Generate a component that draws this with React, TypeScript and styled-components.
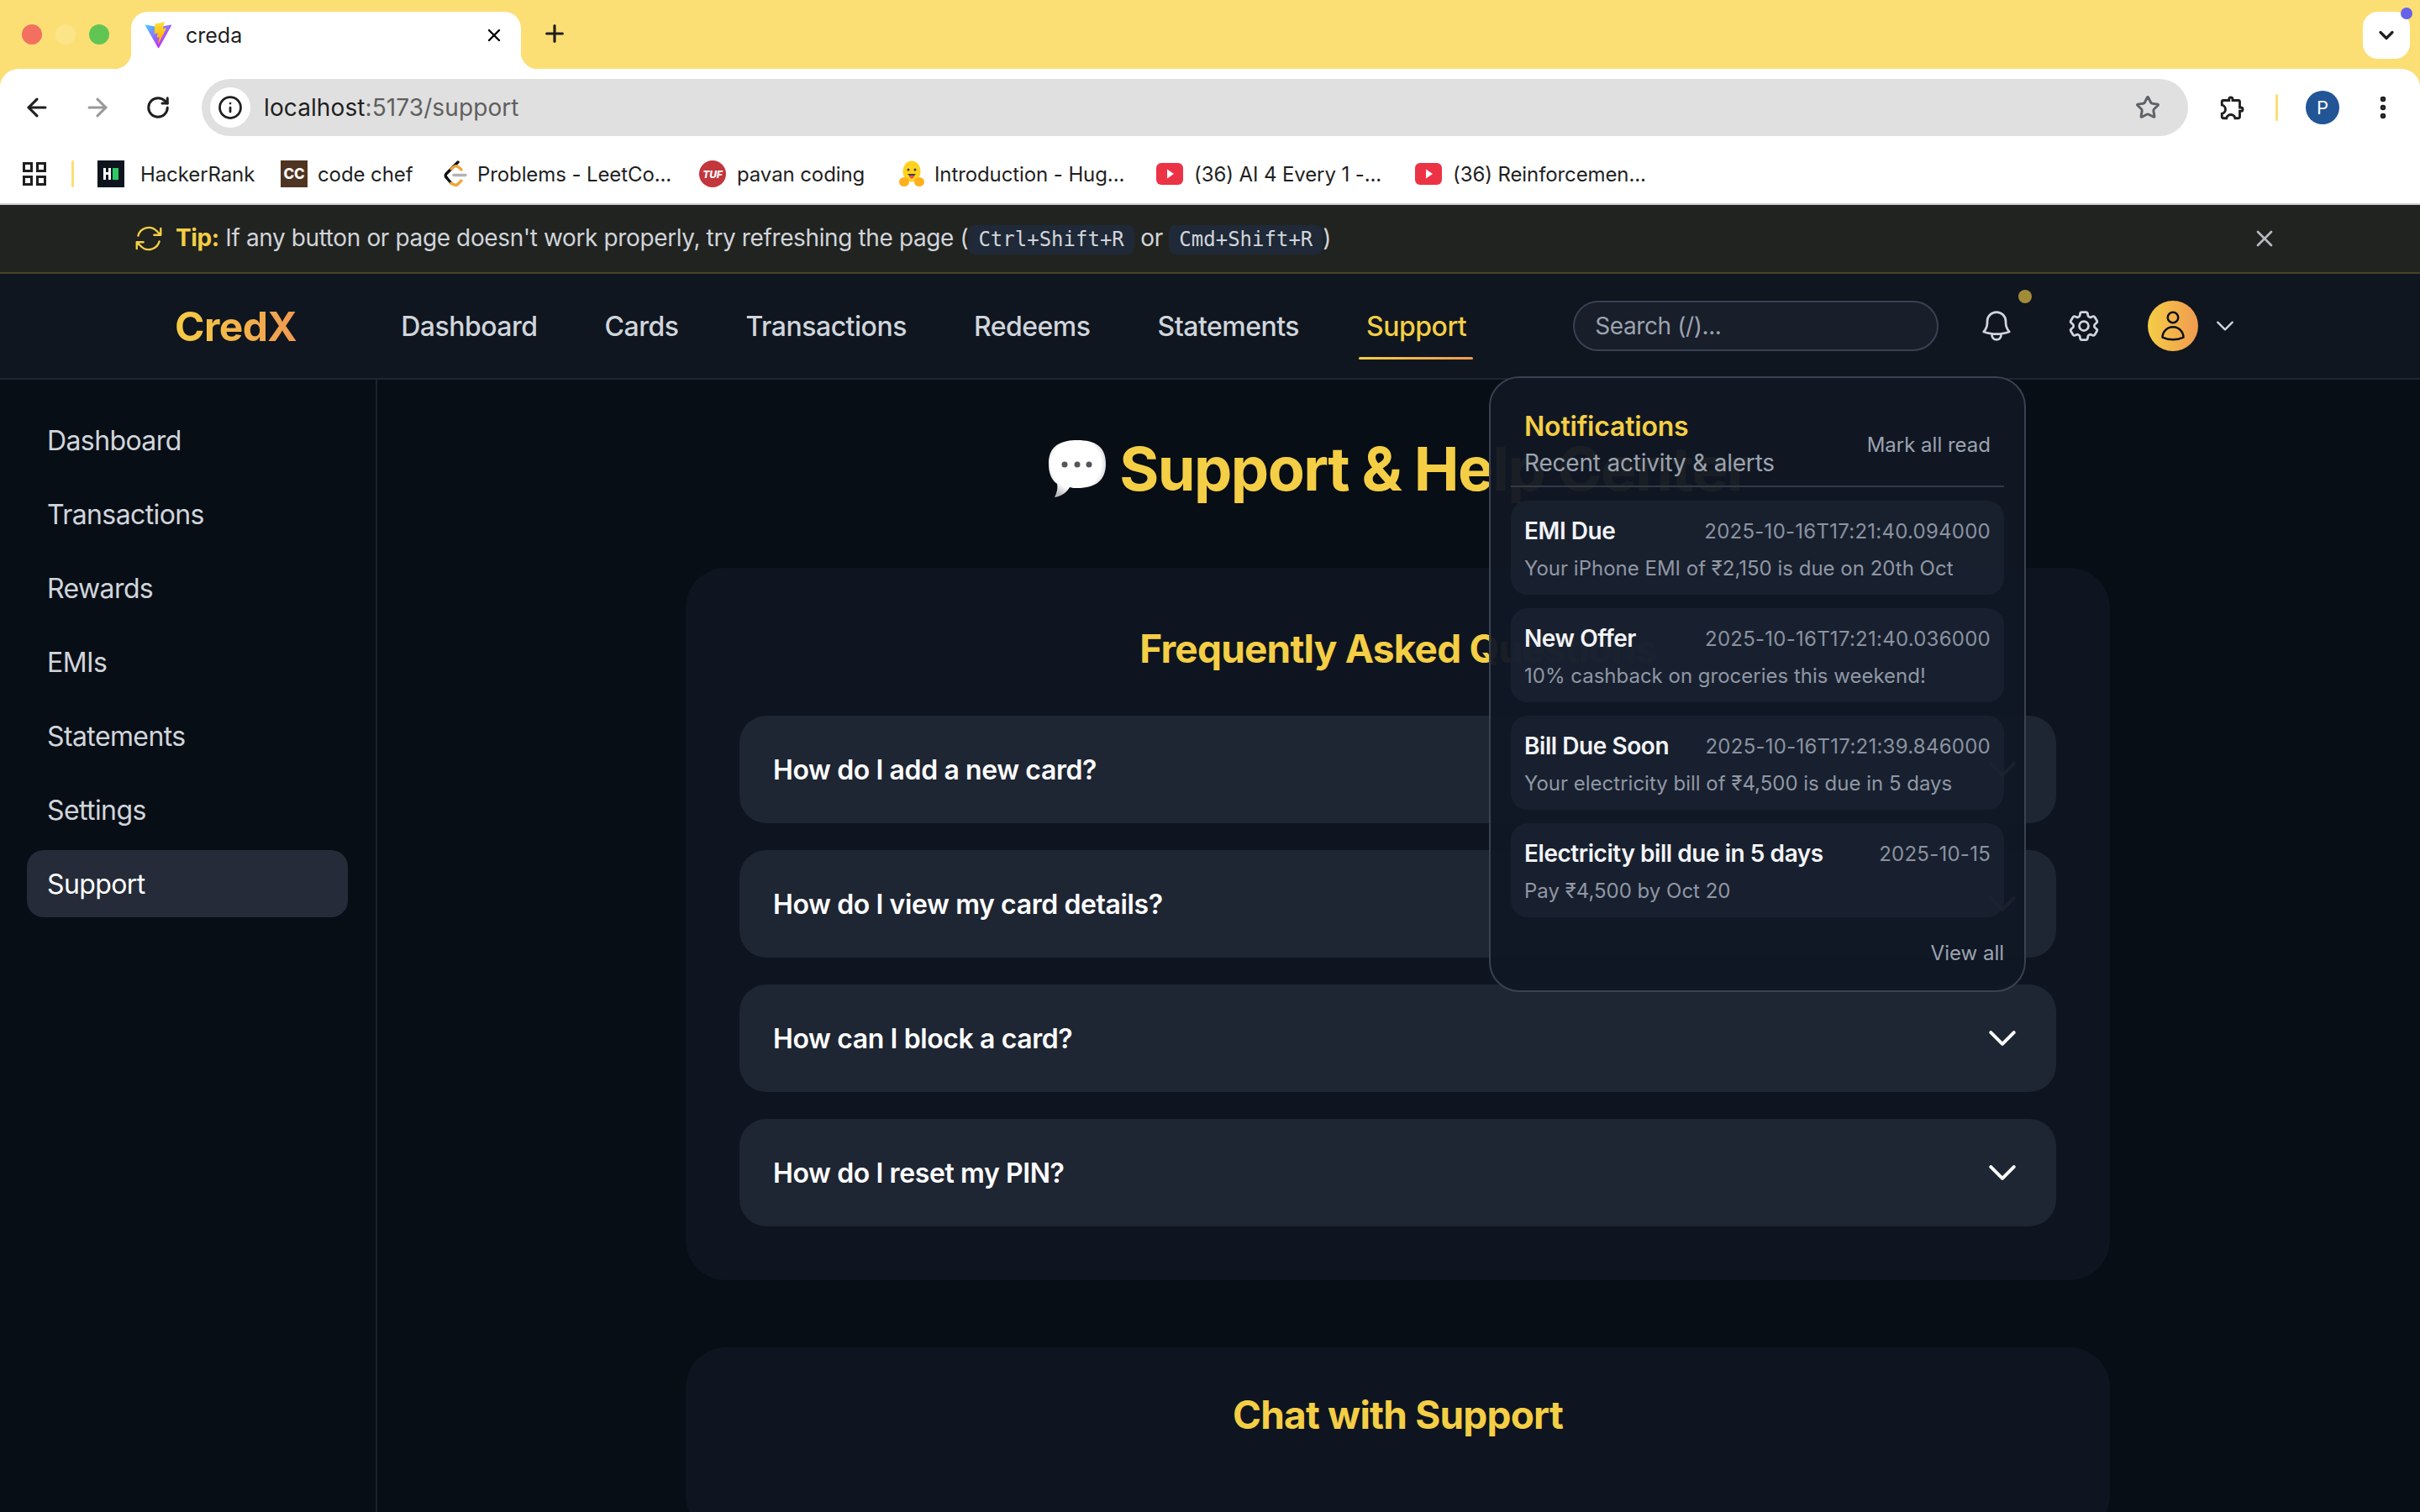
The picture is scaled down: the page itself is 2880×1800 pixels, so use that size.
import React from "react";
import styled, { createGlobalStyle } from "styled-components";
import { ArrowLeft, ArrowRight, RotateCw, Info, Star, EllipsisVertical, Plus, X, ChevronDown } from "lucide-react";
import { MdOutlineExtension } from "react-icons/md";
import { HiOutlineBell, HiOutlineCog6Tooth, HiOutlineUser, HiOutlineChevronDown, HiOutlineArrowPath } from "react-icons/hi2";

const YELLOW = "#f4ce45";
const CHROME = "#fbdf75";
const SANS = `Inter, "Noto Sans", sans-serif`;

const Global = createGlobalStyle`
  html, body { margin: 0; padding: 0; background: #080e16; }
  body { font-family: ${SANS}; }
  * { box-sizing: border-box; }
`;

const Page = styled.div`
  width: 2880px; height: 1800px; overflow: hidden;
  display: flex; flex-direction: column; background: #080e16;
`;

/* ---------- browser chrome ---------- */
const TabStrip = styled.div`
  height: 82px; background: ${CHROME}; padding: 14px 12px 0 26px;
  display: flex; align-items: flex-start; flex: none;
`;
const Lights = styled.div`display: flex; gap: 16px; margin-top: 15px;`;
const Light = styled.span<{ $c: string }>`
  width: 24px; height: 24px; border-radius: 50%; background: ${p => p.$c};
`;
const Tab = styled.div`
  position: relative; width: 464px; height: 68px; margin-left: 26px;
  background: #fff; border-radius: 20px 20px 0 0;
  display: flex; align-items: center; padding: 0 20px 12px 16px; gap: 16px;
  &::before, &::after {
    content: ""; position: absolute; bottom: 0; width: 20px; height: 20px;
  }
  &::before { left: -20px; background: radial-gradient(circle at 0 0, transparent 20px, #fff 20.5px); }
  &::after { right: -20px; background: radial-gradient(circle at 100% 0, transparent 20px, #fff 20.5px); }
`;
const TabTitle = styled.span`font-size: 25px; color: #1f1f1f; flex: 1;`;
const NewTab = styled.span`display: flex; margin: 10px 0 0 24px; color: #1f1f1f;`;
const TabMenu = styled.div`
  position: relative; margin-left: auto; width: 56px; height: 56px; border-radius: 18px;
  background: #fff; display: flex; align-items: center; justify-content: center; color: #1f1f1f;
`;
const TabDot = styled.span`
  position: absolute; top: -5px; right: -3px; width: 14px; height: 14px; border-radius: 50%;
  background: #6763e8;
`;
const ToolbarWrap = styled.div`background: ${CHROME}; flex: none;`;
const Toolbar = styled.div`
  height: 94px; background: #fff; border-radius: 22px 22px 0 0;
  display: flex; align-items: center; padding: 0 0 2px 26px;
`;
const NavIcon = styled.span<{ $w?: number; $c?: string; $ml?: number }>`
  display: flex; width: ${p => p.$w ?? 36}px; justify-content: center; color: ${p => p.$c ?? "#1f1f1f"};
  margin-left: ${p => p.$ml ?? 0}px;
`;
const NavIcons = styled.div`display: flex; gap: 36px; align-items: center;`;
const Omnibox = styled.div`
  width: 2364px; height: 68px; margin-left: 34px; border-radius: 34px; background: #e0e0e0;
  display: flex; align-items: center; padding: 0 30px 0 10px;
`;
const InfoChip = styled.span`
  width: 48px; height: 48px; border-radius: 50%; background: #fff;
  display: flex; align-items: center; justify-content: center; color: #1f1f1f;
`;
const Url = styled.span`font-size: 28px; color: #1f1f1f; margin-left: 16px; flex: 1; letter-spacing: .1px;`;
const UrlDim = styled.span`color: #5f5f5f;`;
const ToolRight = styled.div`display: flex; align-items: center; margin-left: 36px;`;
const ToolSep = styled.span`width: 3px; height: 32px; border-radius: 2px; background: ${CHROME}; margin: 0 33px 0 34px;`;
const Profile = styled.span`
  width: 40px; height: 40px; border-radius: 50%; background: #225596; color: #fff;
  display: flex; align-items: center; justify-content: center; font-size: 22px;
`;

const BookmarkBar = styled.div`
  height: 68px; background: #fff; border-bottom: 2px solid #cdcdcd; flex: none;
  display: flex; align-items: center; padding: 0 0 4px 27px;
`;
const BmSep = styled.span`width: 3px; height: 32px; border-radius: 2px; background: ${CHROME}; margin: 0 28px 0 30px;`;
const Bookmark = styled.span<{ $w: number; $gap: number }>`
  display: flex; align-items: center; gap: ${p => p.$gap}px; width: ${p => p.$w}px;
  font-size: 24px; letter-spacing: -0.1px; color: #1f1f1f; white-space: nowrap;
`;

/* ---------- app ---------- */
const TipBar = styled.div`
  height: 82px; flex: none; background: #212320; border-bottom: 2px solid #4a4326;
  display: flex; align-items: center; justify-content: space-between; padding: 0 169px 0 158px;
  color: #d1d5db; font-size: 28px; letter-spacing: -0.38px;
`;
const TipLeft = styled.div`display: flex; align-items: center; gap: 13px; white-space: pre;`;
const TipIcon = styled.span`display: flex; color: ${YELLOW};`;
const TipLabel = styled.b`color: ${YELLOW}; font-weight: 700;`;
const Kbd = styled.kbd`
  display: inline-block; font-family: "DejaVu Sans Mono", monospace; font-size: 24px; line-height: 35px;
  letter-spacing: 0; padding: 0 12px; border-radius: 8px; background: #1f2937; color: #d1d5db;
`;
const TipClose = styled.span`display: flex; color: #b6bac1;`;

const NavBar = styled.header`
  position: relative; z-index: 10; height: 126px; flex: none; background: #0f1620;
  border-bottom: 2px solid #1f2633; display: flex; align-items: center; padding-left: 208px;
`;
const Logo = styled.span`
  font-size: 48px; font-weight: 700; letter-spacing: -0.6px;
  background: linear-gradient(90deg, #f5cd45, #f09a50);
  -webkit-background-clip: text; background-clip: text; color: transparent;
`;
const NavLinks = styled.nav`display: flex; gap: 80px; margin-left: 124px;`;
const NavLink = styled.a<{ $active?: boolean }>`
  position: relative; font-size: 32px; font-weight: 500; letter-spacing: -0.5px;
  color: ${p => (p.$active ? YELLOW : "#d1d5db")};
  ${p => p.$active && `&::after {
    content: ""; position: absolute; left: -9px; right: -8px; bottom: -20px; height: 3px;
    background: linear-gradient(90deg, ${YELLOW}, #f09a50); border-radius: 2px;
  }`}
`;
const Actions = styled.div`display: flex; align-items: center; margin-left: 127px;`;
const Search = styled.input`
  width: 435px; height: 60px; border-radius: 30px; border: 2px solid #3a4150; background: #181e2a;
  padding: 0 24px; font: 400 28px ${SANS}; letter-spacing: -0.4px; color: #d1d5db; outline: none;
  &::placeholder { color: #9ca3af; opacity: 1; }
`;
const IconBtn = styled.span<{ $ml: number }>`
  position: relative; display: flex; margin-left: ${p => p.$ml}px; color: #d1d5db;
`;
const BellDot = styled.span`
  position: absolute; top: -21px; right: -20px; width: 16px; height: 16px; border-radius: 50%;
  background: #a18b39;
`;
const Avatar = styled.span`
  width: 60px; height: 60px; margin-left: 54px; border-radius: 50%; color: #0b0f16;
  background: linear-gradient(90deg, #f5cd45, #f09a50);
  display: flex; align-items: center; justify-content: center;
`;

const Dropdown = styled.div`
  position: absolute; top: 122px; right: 469px; width: 639px; height: 733px; z-index: 20;
  background: rgba(17, 24, 36, 0.96); border: 2px solid #3a4150; border-radius: 36px;
  padding: 36px 24px 0; display: flex; flex-direction: column;
`;
const DropHead = styled.div`
  display: flex; justify-content: space-between; align-items: center;
  padding: 0 16px 6px; border-bottom: 2px solid #333a48;
`;
const DropTitle = styled.div`font-size: 32px; line-height: 44px; font-weight: 600; color: ${YELLOW}; letter-spacing: -0.2px;`;
const DropSub = styled.div`font-size: 28px; line-height: 42px; color: #9ca3af; letter-spacing: -0.2px;`;
const MarkRead = styled.span`font-size: 24px; color: #9ca3af;`;
const List = styled.div`display: flex; flex-direction: column; gap: 16px; margin-top: 16px;`;
const Item = styled.div`
  height: 112px; border-radius: 20px; background: rgba(28, 36, 51, 0.72); padding: 16px;
  display: flex; flex-direction: column; gap: 7px;
`;
const ItemTop = styled.div`display: flex; justify-content: space-between; align-items: center;`;
const ItemTitle = styled.span`font-size: 28px; line-height: 40px; font-weight: 600; color: #f3f4f6; letter-spacing: -0.45px;`;
const ItemTime = styled.span`font-size: 24px; letter-spacing: .25px; color: #8b92a0;`;
const ItemBody = styled.span`font-size: 24px; line-height: 36px; color: #9097a4;`;
const ViewAll = styled.span`align-self: flex-end; margin-top: 28px; font-size: 24px; line-height: 29px; color: #9ca3af;`;

const Body = styled.div`flex: 1; display: flex; min-height: 0;`;
const Sidebar = styled.aside`
  width: 449px; flex: none; border-right: 2px solid #1c222e; padding: 32px 33px 32px 32px;
  display: flex; flex-direction: column; gap: 8px;
`;
const SideItem = styled.a<{ $active?: boolean }>`
  height: 80px; border-radius: 20px; padding: 0 24px; display: flex; align-items: center;
  font-size: 32px; letter-spacing: -0.6px; color: ${p => (p.$active ? "#fff" : "#d1d5db")};
  background: ${p => (p.$active ? "#252b38" : "transparent")};
`;
const Main = styled.main`flex: 1; padding-top: 64px; display: flex; flex-direction: column; align-items: center;`;
const PageTitle = styled.h1`
  margin: 0 0 76px; height: 84px; display: flex; align-items: center; gap: 14px;
  font-size: 72px; font-weight: 700; line-height: 84px; color: ${YELLOW}; letter-spacing: -1.6px;
`;
const Card = styled.section<{ $top: number }>`
  width: 1695px; flex: none; margin-bottom: 80px; padding: ${p => p.$top}px 64px 64px;
  background: #0e1520; border-radius: 48px; transform: translateX(-1px);
`;
const CardTitle = styled.h2`
  margin: 0 0 48px; text-align: center; font-size: 46px; line-height: 64px; font-weight: 700;
  color: ${YELLOW}; letter-spacing: -0.8px;
`;
const Faqs = styled.div`display: flex; flex-direction: column; gap: 32px;`;
const Faq = styled.div`
  height: 128px; border-radius: 32px; background: #1e2533; padding: 0 42px 0 40px;
  display: flex; align-items: center; justify-content: space-between;
  font-size: 32px; font-weight: 600; letter-spacing: -0.4px; color: #fff;
`;
const FaqChevron = styled.span`display: flex; color: #fff;`;

const ViteIcon = () => (
  <svg width="33" height="32" viewBox="0 0 410 404" fill="none">
    <defs>
      <linearGradient id="va" x1="6" y1="33" x2="235" y2="344" gradientUnits="userSpaceOnUse"><stop stopColor="#41D1FF" /><stop offset="1" stopColor="#BD34FE" /></linearGradient>
      <linearGradient id="vb" x1="194.65" y1="8.8" x2="236.08" y2="292.99" gradientUnits="userSpaceOnUse"><stop stopColor="#FFEA83" /><stop offset=".083" stopColor="#FFDD35" /><stop offset="1" stopColor="#FFA800" /></linearGradient>
    </defs>
    <path d="M399.641 59.5246L215.643 388.545C211.844 395.338 202.084 395.378 198.228 388.618L10.5817 59.5563C6.38087 52.1896 12.6802 43.2665 21.0281 44.7586L205.223 77.6824C206.398 77.8924 207.601 77.8904 208.776 77.6763L389.119 44.8058C397.439 43.2894 403.768 52.1434 399.641 59.5246Z" fill="url(#va)" />
    <path d="M292.965 1.5744L156.801 28.2552C154.563 28.6937 152.906 30.5903 152.771 32.8664L144.395 174.33C144.198 177.662 147.258 180.248 150.51 179.498L188.42 170.749C191.967 169.931 195.172 173.055 194.443 176.622L183.18 231.775C182.422 235.487 185.907 238.661 189.532 237.56L212.947 230.446C216.577 229.344 220.065 232.527 219.297 236.242L201.398 322.875C200.278 328.294 207.486 331.249 210.492 326.603L212.5 323.5L323.454 102.072C325.312 98.3645 322.108 94.137 318.036 94.9228L279.014 102.454C275.347 103.161 272.227 99.746 273.262 96.1583L298.731 7.86689C299.767 4.27314 296.636 0.855181 292.965 1.5744Z" fill="url(#vb)" />
  </svg>
);

const AppsIcon = () => (
  <svg width="28" height="28" viewBox="0 0 28 28" fill="none" stroke="#1f1f1f" strokeWidth="3">
    <rect x="1.5" y="1.5" width="9" height="9" /><rect x="17.5" y="1.5" width="9" height="9" />
    <rect x="1.5" y="17.5" width="9" height="9" /><rect x="17.5" y="17.5" width="9" height="9" />
  </svg>
);
const HackerIcon = () => (
  <svg width="32" height="32" viewBox="0 0 32 32">
    <rect width="32" height="32" fill="#0e141e" />
    <path d="M7 9h3v5h3V9h3v14h-3v-6h-3v6H7z" fill="#fff" />
    <rect x="18" y="9" width="7" height="14" fill="#2ec866" />
  </svg>
);
const CodeChefIcon = () => (
  <svg width="32" height="32" viewBox="0 0 32 32">
    <rect width="32" height="32" fill="#4f3422" />
    <text x="16" y="22" textAnchor="middle" fontFamily="Inter, sans-serif" fontWeight="800" fontSize="17" fill="#fff">CC</text>
  </svg>
);
const LeetIcon = () => (
  <svg width="32" height="32" viewBox="0 0 32 32" fill="none" strokeWidth="3.4" strokeLinecap="round" strokeLinejoin="round">
    <path d="M18 2 L4 16 Q2.500 18 4 20" stroke="#111" />
    <path d="M4 20 L10 27" stroke="#111" />
    <path d="M10 27 Q13 30 17 29 L22 24" stroke="#f0a63c" />
    <path d="M10 10 L14 7 Q17 6 20 9 L22 11" stroke="#f0a63c" />
    <path d="M13 17.500 H27" stroke="#b3b3b3" />
  </svg>
);
const TufIcon = () => (
  <svg width="32" height="32" viewBox="0 0 32 32">
    <circle cx="16" cy="16" r="16" fill="#c2363c" />
    <text x="16" y="20.500" textAnchor="middle" fontFamily="Inter, sans-serif" fontStyle="italic" fontWeight="800" fontSize="12" fill="#fff">TUF</text>
  </svg>
);
const HugIcon = () => (
  <svg width="32" height="32" viewBox="0 0 32 32">
    <ellipse cx="16" cy="13" rx="10.500" ry="12.500" fill="#ffd21e" />
    <circle cx="12" cy="11" r="1.500" fill="#3a3b45" /><circle cx="20" cy="11" r="1.500" fill="#3a3b45" />
    <path d="M11 16q5 7 10 0z" fill="#3a3b45" /><ellipse cx="16" cy="19.500" rx="2.500" ry="2" fill="#ef4e4e" />
    <ellipse cx="7" cy="25.500" rx="6" ry="5.500" fill="#ffb01e" /><ellipse cx="25" cy="25.500" rx="6" ry="5.500" fill="#ffb01e" />
  </svg>
);
const YouTubeIcon = () => (
  <svg width="32" height="32" viewBox="0 0 32 32">
    <rect y="3" width="32" height="26" rx="6" fill="#ec3345" /><path d="M13 10.500l8 5.500-8 5.500z" fill="#fff" />
  </svg>
);
const BalloonIcon = () => (
  <svg width="72" height="70" viewBox="0 0 72 70">
    <defs>
      <radialGradient id="bg" cx=".48" cy=".42" r=".62"><stop offset=".7" stopColor="#fff" /><stop offset="1" stopColor="#b9b9be" /></radialGradient>
    </defs>
    <path d="M36 1C58 1 70 9 70 29C70 49 58 58 36 58C33 58 30 58 27 57C23 64 17 68 9 69C12 63 13 58 12 53C5 48 2 40 2 29C2 9 14 1 36 1Z" fill="url(#bg)" />
    <circle cx="21" cy="30" r="3.500" fill="#55565a" /><circle cx="36" cy="30" r="3.500" fill="#55565a" /><circle cx="50" cy="30" r="3.500" fill="#55565a" />
  </svg>
);

const bookmarks: [React.ReactNode, string, number, number][] = [
  [<HackerIcon />, "HackerRank", 218, 19],
  [<CodeChefIcon />, "code chef", 193, 12],
  [<LeetIcon />, "Problems - LeetCo...", 305, 9],
  [<TufIcon />, "pavan coding", 237, 13],
  [<HugIcon />, "Introduction - Hug...", 307, 11],
  [<YouTubeIcon />, "(36) AI 4 Every 1 -...", 308, 13],
  [<YouTubeIcon />, "(36) Reinforcemen...", 300, 13],
];
const navLinks = ["Dashboard", "Cards", "Transactions", "Redeems", "Statements", "Support"];
const sideLinks = ["Dashboard", "Transactions", "Rewards", "EMIs", "Statements", "Settings", "Support"];
const faqs = ["How do I add a new card?", "How do I view my card details?", "How can I block a card?", "How do I reset my PIN?"];
const notes = [
  ["EMI Due", "2025-10-16T17:21:40.094000", "Your iPhone EMI of ₹2,150 is due on 20th Oct"],
  ["New Offer", "2025-10-16T17:21:40.036000", "10% cashback on groceries this weekend!"],
  ["Bill Due Soon", "2025-10-16T17:21:39.846000", "Your electricity bill of ₹4,500 is due in 5 days"],
  ["Electricity bill due in 5 days", "2025-10-15", "Pay ₹4,500 by Oct 20"],
];

export default function App() {
  return (
    <Page>
      <Global />
      <TabStrip>
        <Lights>
          <Light $c="#f36f60" /><Light $c="#fce588" /><Light $c="#61c554" />
        </Lights>
        <Tab>
          <ViteIcon />
          <TabTitle>creda</TabTitle>
          <X size={24} strokeWidth={2.4} />
        </Tab>
        <NewTab><Plus size={32} strokeWidth={2.4} /></NewTab>
        <TabMenu>
          <ChevronDown size={28} strokeWidth={2.8} />
          <TabDot />
        </TabMenu>
      </TabStrip>
      <ToolbarWrap>
        <Toolbar>
          <NavIcons>
            <NavIcon><ArrowLeft size={34} strokeWidth={2.2} /></NavIcon>
            <NavIcon $c="#9a9a9a"><ArrowRight size={34} strokeWidth={2.2} /></NavIcon>
            <NavIcon><RotateCw size={30} strokeWidth={2.4} /></NavIcon>
          </NavIcons>
          <Omnibox>
            <InfoChip><Info size={30} strokeWidth={2.2} /></InfoChip>
            <Url>localhost<UrlDim>:5173/support</UrlDim></Url>
            <NavIcon $c="#5f6368"><Star size={30} strokeWidth={2.4} /></NavIcon>
          </Omnibox>
          <ToolRight>
            <NavIcon $w={34}><MdOutlineExtension size={40} /></NavIcon>
            <ToolSep />
            <Profile>P</Profile>
            <NavIcon $w={36} $ml={34}><EllipsisVertical size={34} strokeWidth={2.6} /></NavIcon>
          </ToolRight>
        </Toolbar>
      </ToolbarWrap>
      <BookmarkBar>
        <AppsIcon />
        <BmSep />
        {bookmarks.map(([icon, label, w, gap]) => (
          <Bookmark key={label} $w={w} $gap={gap}>{icon}{label}</Bookmark>
        ))}
      </BookmarkBar>
      <TipBar>
        <TipLeft>
          <TipIcon><HiOutlineArrowPath size={38} /></TipIcon>
          <span>
            <TipLabel>Tip:</TipLabel> If any button or page doesn't work properly, try refreshing the page (<Kbd>Ctrl+Shift+R</Kbd> or <Kbd>Cmd+Shift+R</Kbd>)
          </span>
        </TipLeft>
        <TipClose><X size={32} strokeWidth={2} /></TipClose>
      </TipBar>
      <NavBar>
        <Logo>CredX</Logo>
        <NavLinks>
          {navLinks.map(l => <NavLink key={l} $active={l === "Support"}>{l}</NavLink>)}
        </NavLinks>
        <Actions>
          <Search placeholder="Search (/)..." />
          <IconBtn $ml={47}><HiOutlineBell size={44} /><BellDot /></IconBtn>
          <IconBtn $ml={60}><HiOutlineCog6Tooth size={44} /></IconBtn>
          <Avatar><HiOutlineUser size={40} /></Avatar>
          <IconBtn $ml={18}><HiOutlineChevronDown size={28} strokeWidth={2} /></IconBtn>
        </Actions>
        <Dropdown>
          <DropHead>
            <div>
              <DropTitle>Notifications</DropTitle>
              <DropSub>Recent activity &amp; alerts</DropSub>
            </div>
            <MarkRead>Mark all read</MarkRead>
          </DropHead>
          <List>
            {notes.map(([title, time, body]) => (
              <Item key={title}>
                <ItemTop><ItemTitle>{title}</ItemTitle><ItemTime>{time}</ItemTime></ItemTop>
                <ItemBody>{body}</ItemBody>
              </Item>
            ))}
          </List>
          <ViewAll>View all</ViewAll>
        </Dropdown>
      </NavBar>
      <Body>
        <Sidebar>
          {sideLinks.map(l => <SideItem key={l} $active={l === "Support"}>{l}</SideItem>)}
        </Sidebar>
        <Main>
          <PageTitle><BalloonIcon />Support &amp; Help Center</PageTitle>
          <Card $top={64}>
            <CardTitle>Frequently Asked Questions</CardTitle>
            <Faqs>
              {faqs.map(q => (
                <Faq key={q}>{q}<FaqChevron><HiOutlineChevronDown size={44} strokeWidth={2.2} /></FaqChevron></Faq>
              ))}
            </Faqs>
          </Card>
          <Card $top={48}>
            <CardTitle>Chat with Support</CardTitle>
          </Card>
        </Main>
      </Body>
    </Page>
  );
}
